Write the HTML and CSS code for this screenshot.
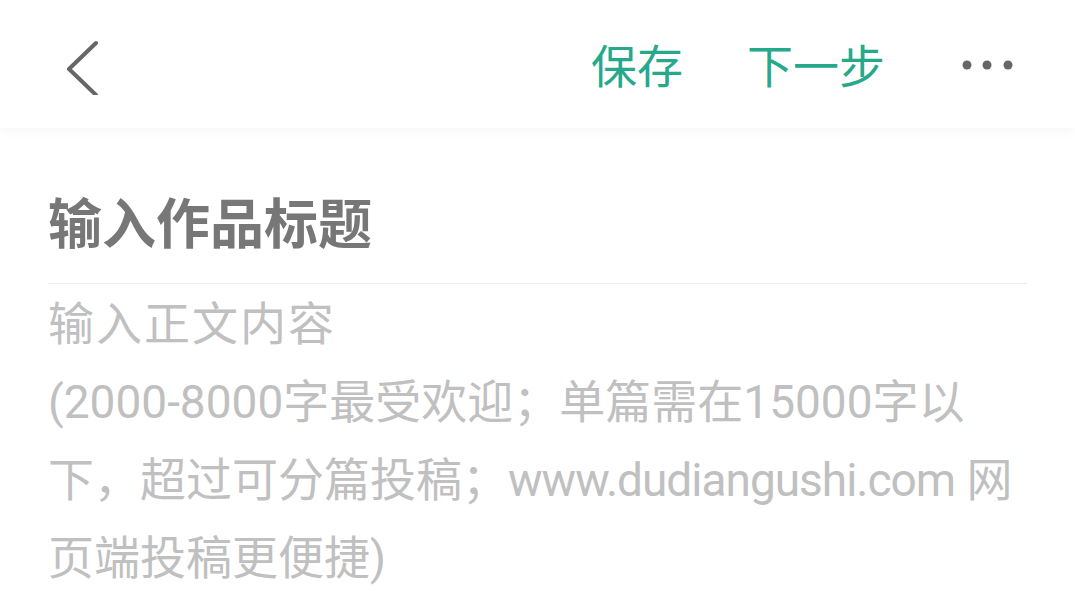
FILE: index.html
```html
<!DOCTYPE html>
<html lang="zh-CN">
<head>
  <meta charset="UTF-8" />
  <meta name="viewport" content="width=device-width, initial-scale=1.0"/>
  <title>编辑作品</title>
  <link rel="stylesheet" href="styles.css">
</head>
<body>
  <header class="top-bar">
    <button class="back-button" aria-label="返回">
      <svg width="42" height="60" viewBox="0 0 42 60">
        <path d="M34 8 L7 34 L34 60" fill="none" stroke="#666" stroke-width="4" stroke-linecap="round" stroke-linejoin="round"/>
      </svg>
    </button>
    <nav class="actions">
      <button class="action-link">保存</button>
      <button class="action-link next">下一步</button>
      <button class="more-button" aria-label="更多">
        <svg width="54" height="14" viewBox="0 0 54 14">
          <circle cx="6" cy="7" r="4.5" fill="#666"/>
          <circle cx="26" cy="7" r="4.5" fill="#666"/>
          <circle cx="47" cy="7" r="4.5" fill="#666"/>
        </svg>
      </button>
    </nav>
  </header>

  <main class="editor">
    <div class="title-field">输入作品标题</div>
    <div class="body-field">
      <span class="line lead">输入正文内容</span>
      <span class="line">(2000-8000字最受欢迎；单篇需在15000字以</span>
      <span class="line">下，超过可分篇投稿；<span class="url">www.dudiangushi.com</span> 网</span>
      <span class="line">页端投稿更便捷)</span>
    </div>
  </main>
</body>
</html>
```

FILE: styles.css
```css
/* General Reset */
* {
    margin: 0;
    padding: 0;
    box-sizing: border-box;
}
body {
    font-family: 'Noto Sans CJK SC', 'Noto Sans', sans-serif;
    background-color: #fff;
    color: #333;
    overflow: hidden;
}
button {
    background: none;
    border: none;
    font-family: inherit;
    cursor: pointer;
}
.top-bar {
    display: flex;
    align-items: center;
    height: 128px;
    padding: 2px 60px 0 62px;
    background-color: #fff;
    box-shadow: 0 4px 10px rgba(0, 0, 0, 0.035);
    position: relative;
}
.back-button {
    display: flex;
    align-items: center;
}
.actions {
    margin-left: auto;
    display: flex;
    align-items: center;
}
.action-link {
    font-size: 46px;
    line-height: 60px;
    color: #26a98b;
    margin-right: 64px;
    padding-bottom: 4px;
}
.action-link.next {
    margin-right: 76px;
}
.more-button {
    display: flex;
    align-items: center;
}
.editor {
    padding: 0 48px;
}
.title-field {
    font-size: 54px;
    font-weight: bold;
    line-height: 54px;
    color: #777;
    padding: 64px 0 35px;
    border-bottom: 1px solid #ececec;
    margin-top: 2px;
}
.body-field {
    font-family: Roboto, 'Noto Sans CJK SC', sans-serif;
    font-size: 46px;
    line-height: 78px;
    color: #c0c0c0;
    margin-top: 1px;
}
.line {
    display: block;
    white-space: nowrap;
}
.line.lead {
    letter-spacing: 2px;
}
.url {
    letter-spacing: -1px;
}
```
